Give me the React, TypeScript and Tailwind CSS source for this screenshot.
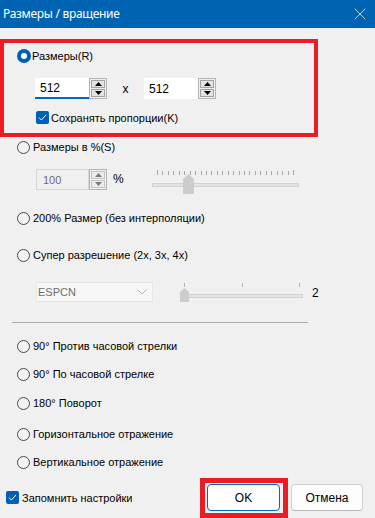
import { X } from 'lucide-react'

/** Radio button in Windows 11 dialog style */
function Radio({ checked = false, label }: { checked?: boolean; label: string }) {
  return (
    <div className="flex items-center h-[16px]">
      {checked ? (
        <span className="w-[14px] h-[14px] rounded-full bg-[#005fb8] flex items-center justify-center">
          <span className="w-[6px] h-[6px] rounded-full bg-white" />
        </span>
      ) : (
        <span className="w-[13px] h-[13px] rounded-full border border-[#4a4a4a] bg-[#f3f3f3]" />
      )}
      <span className={checked ? 'ml-[1px]' : 'ml-[3px]'}>{label}</span>
    </div>
  )
}

/** Checked checkbox */
function Check() {
  return (
    <span className="w-[13px] h-[13px] rounded-[2px] bg-[#005fb8] flex items-center justify-center">
      <svg width="9" height="7" viewBox="0 0 9 7">
        <path d="M1 3.6 L3.4 6 L8 1" fill="none" stroke="white" strokeWidth="1" />
      </svg>
    </span>
  )
}

function Arrow({ up, disabled }: { up?: boolean; disabled?: boolean }) {
  return (
    <svg width="7" height="4" viewBox="0 0 7 4">
      <path d={up ? 'M0 4 L3.5 0 L7 4 Z' : 'M0 0 L3.5 4 L7 0 Z'} fill={disabled ? '#7a7a7a' : '#000'} />
    </svg>
  )
}

/** Up/down buttons on the right of a number box */
function SpinButtons({ disabled }: { disabled?: boolean }) {
  const btn = disabled
    ? 'flex-1 border border-[#c4c4c4] bg-[#ececec] flex items-center justify-center'
    : 'flex-1 border border-[#a3a3a3] bg-[#e3e3e3] flex items-center justify-center'
  return (
    <div className="w-[18px] h-[21px] border border-[#b4b4b4] bg-[#f0f0f0] flex flex-col p-[1px] gap-[1px]">
      <div className={btn}>
        <Arrow up disabled={disabled} />
      </div>
      <div className={btn}>
        <Arrow disabled={disabled} />
      </div>
    </div>
  )
}

export default function App() {
  const ticks = Array.from({ length: 26 }, (_, i) => 7 + i * 5.44)

  return (
    <div className="relative w-[375px] h-[518px] bg-[#f0f0f0] overflow-hidden font-['Liberation_Sans',Arial,sans-serif] text-[11px] leading-[16px] text-black">
      {/* Title bar */}
      <div className="h-[28px] bg-[#0063b1] flex items-center justify-between pl-[3px] pr-[5px] text-white">
        <span className="text-[12px] font-['Noto_Sans',sans-serif] tracking-[-0.3px]">Размеры / вращение</span>
        <X className="w-[20px] h-[20px]" strokeWidth={0.9} />
      </div>

      {/* Resize */}
      <div className="mt-[20px] ml-[17px]">
        <Radio checked label="Размеры(R)" />
      </div>

      <div className="mt-[14px] ml-[35px] flex items-center h-[21px]">
        <div className="w-[54px] h-[21px] bg-white border-b-2 border-[#0067c0] pl-[5px] flex items-center text-[12px]">512</div>
        <SpinButtons />
        <span className="w-[37px] text-center text-[12px]">x</span>
        <div className="w-[54px] h-[21px] bg-white pl-[5px] flex items-center text-[12px]">512</div>
        <SpinButtons />
      </div>

      <div className="mt-[12px] ml-[36px] flex items-center h-[13px]">
        <Check />
        <span className="ml-[2px]">Сохранять пропорции(K)</span>
      </div>

      {/* Percent */}
      <div className="mt-[15px] ml-[17px]">
        <Radio label="Размеры в %(S)" />
      </div>

      <div className="mt-[13px] ml-[36px] flex items-start h-[26px]">
        <div className="mt-[1px] w-[53px] h-[21px] border border-[#d6d6d6] pl-[6px] flex items-center text-[#6d6d6d]">100</div>
        <div className="mt-[1px]">
          <SpinButtons disabled />
        </div>
        <span className="w-[43px] pl-[6px] mt-[3px] text-[12px]">%</span>
        <svg width="152" height="26" viewBox="0 0 152 26">
          {ticks.map((x, i) => (
            <rect key={i} x={Math.round(x)} y={i === 0 || i === 25 ? 2 : 3} width="1" height={i === 0 || i === 25 ? 5 : 4} fill="#a8a8a8" />
          ))}
          <rect x="2.5" y="15.5" width="146" height="3" fill="#e4e4e4" stroke="#d2d2d2" />
          <path d="M33 11 L38.5 6 L44 11 L44 26 L33 26 Z" fill="#cccccc" />
        </svg>
      </div>

      {/* 200% */}
      <div className="mt-[16px] ml-[17px]">
        <Radio label="200% Размер (без интерполяции)" />
      </div>

      {/* Super resolution */}
      <div className="mt-[21px] ml-[17px]">
        <Radio label="Супер разрешение (2x, 3x, 4x)" />
      </div>

      <div className="mt-[18px] ml-[36px] flex items-start h-[24px]">
        <div className="mt-[1px] w-[117px] h-[20px] bg-[#f7f7f7] border border-[#e6e6e6] flex items-center justify-between pl-[1px] pr-[5px] text-[#6d6d6d]">
          <span>ESPCN</span>
          <svg width="10" height="6" viewBox="0 0 10 6">
            <path d="M0.5 0.5 L5 5 L9.5 0.5" fill="none" stroke="#b4b4b4" strokeWidth="1" />
          </svg>
        </div>
        <svg className="ml-[25px]" width="126" height="24" viewBox="0 0 126 24">
          <rect x="6" y="2" width="1" height="4" fill="#b4b4b4" />
          <rect x="64" y="2" width="1" height="4" fill="#b4b4b4" />
          <rect x="121" y="2" width="1" height="4" fill="#b4b4b4" />
          <rect x="2.5" y="13.5" width="122" height="3" fill="#e4e4e4" stroke="#d2d2d2" />
          <path d="M2 11 L6.5 7 L11 11 L11 21 L2 21 Z" fill="#cccccc" />
        </svg>
        <span className="ml-[8px] mt-[4px] text-[12px]">2</span>
      </div>

      {/* Separator */}
      <div className="mt-[17px] ml-[12px] w-[296px] h-[1px] bg-[#a9a9a9]" />

      {/* Rotation */}
      <div className="ml-[17px]">
        <div className="mt-[15px]">
          <Radio label="90° Против часовой стрелки" />
        </div>
        <div className="mt-[12px]">
          <Radio label="90° По часовой стрелке" />
        </div>
        <div className="mt-[13px]">
          <Radio label="180° Поворот" />
        </div>
        <div className="mt-[15px]">
          <Radio label="Горизонтальное отражение" />
        </div>
        <div className="mt-[12px]">
          <Radio label="Вертикальное отражение" />
        </div>
      </div>

      {/* Footer */}
      <div className="mt-[14px] flex items-center h-[27px]">
        <div className="ml-[6px] flex items-center">
          <Check />
          <span className="ml-[3px]">Запомнить настройки</span>
        </div>
        <div className="ml-auto mr-[12px] flex gap-[11px]">
          <button className="w-[73px] h-[27px] bg-white border border-[#0067c0] rounded-[4px] text-[12px]">OK</button>
          <button className="w-[72px] h-[27px] bg-[#fdfdfd] border border-[#d0d0d0] border-b-[#b8b8b8] rounded-[4px] text-[12px]">Отмена</button>
        </div>
      </div>

      {/* Red annotation boxes */}
      <div className="absolute left-0 top-[39px] w-[318px] h-[98px] border-4 border-[#ec1c24]" />
      <div className="absolute left-[200px] top-[478px] w-[88px] h-[40px] border-[5px] border-[#ec1c24]" />
    </div>
  )
}
